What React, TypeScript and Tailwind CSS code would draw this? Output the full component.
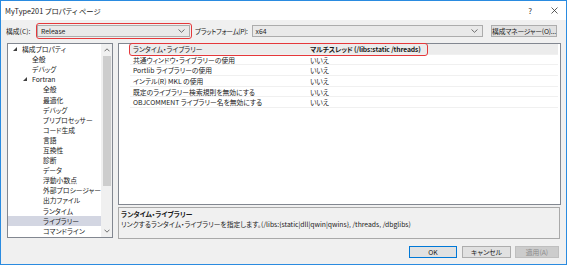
import React from "react";

type TreeItem = {
  label: string;
  level: number;
  expander?: boolean;
  selected?: boolean;
};

const treeItems: TreeItem[] = [
  { label: "構成プロパティ", level: 0, expander: true },
  { label: "全般", level: 1 },
  { label: "デバッグ", level: 1 },
  { label: "Fortran", level: 1, expander: true },
  { label: "全般", level: 2 },
  { label: "最適化", level: 2 },
  { label: "デバッグ", level: 2 },
  { label: "プリプロセッサー", level: 2 },
  { label: "コード生成", level: 2 },
  { label: "言語", level: 2 },
  { label: "互換性", level: 2 },
  { label: "診断", level: 2 },
  { label: "データ", level: 2 },
  { label: "浮動小数点", level: 2 },
  { label: "外部プロシージャー", level: 2 },
  { label: "出力ファイル", level: 2 },
  { label: "ランタイム", level: 2 },
  { label: "ライブラリー", level: 2, selected: true },
  { label: "コマンドライン", level: 2 },
];

const rows = [
  { name: "ランタイム・ライブラリー", value: "マルチスレッド (/libs:static /threads)" },
  { name: "共通ウィンドウ・ライブラリーの使用", value: "いいえ" },
  { name: "Portlib ライブラリーの使用", value: "いいえ" },
  { name: "インテル(R) MKL の使用", value: "いいえ" },
  { name: "既定のライブラリー検索規則を無効にする", value: "いいえ" },
  { name: "OBJCOMMENT ライブラリー名を無効にする", value: "いいえ" },
];

const padByLevel = ["pl-[5px]", "pl-[15px]", "pl-[26px]"];

function Chevron() {
  return (
    <svg width="7" height="4" viewBox="0 0 7 4" className="shrink-0">
      <polyline points="0.5,0.5 3.5,3.3 6.5,0.5" fill="none" stroke="#606060" strokeWidth="0.9" />
    </svg>
  );
}

function Combo({ value, className }: { value: string; className: string }) {
  return (
    <div
      className={`h-[12px] bg-[#e9e9e9] border border-[#acacac] flex items-center justify-between pl-[3px] pr-[4px] ${className}`}
    >
      <span>{value}</span>
      <Chevron />
    </div>
  );
}

export default function App() {
  return (
    <div className="w-[567px] h-[265px] overflow-hidden border border-[#2a8be0] bg-[#f0f0f0] flex flex-col text-[6.8px] leading-[10px] whitespace-nowrap text-[#1a1a1a] font-['Noto_Sans_CJK_JP',sans-serif] [font-feature-settings:'palt']">
      {/* タイトルバー */}
      <div className="h-[19px] shrink-0 bg-white flex items-center pl-[4px] pr-[8px]">
        <span className="text-[7.3px]">MyType201 プロパティ ページ</span>
        <span className="ml-auto text-[8px] text-[#333]">?</span>
        <svg width="7" height="7" viewBox="0 0 7 7" className="ml-[19px]">
          <path d="M0.5 0.5 L6.5 6.5 M6.5 0.5 L0.5 6.5" stroke="#333" strokeWidth="0.8" />
        </svg>
      </div>

      {/* 構成 / プラットフォーム */}
      <div className="h-[16px] mt-[3px] shrink-0 flex items-center pl-[5px] pr-[9px]">
        <span className="w-[31px]">構成(C):</span>
        <div className="relative">
          <Combo value="Release" className="w-[153px]" />
          <div className="absolute -left-[1px] -right-[2px] -top-[2px] -bottom-[2px] border-[1.5px] border-[#e5383b] rounded-[3px]" />
        </div>
        <span className="ml-[5px] mr-[4px] tracking-[-0.4px]">プラットフォーム(P):</span>
        <Combo value="x64" className="flex-1" />
        <div className="ml-[8px] w-[66px] h-[12px] bg-[#e1e1e1] border border-[#adadad] flex items-center justify-center tracking-[-0.2px]">
          構成マネージャー(O)...
        </div>
      </div>

      {/* メイン */}
      <div className="mt-[4px] h-[196px] shrink-0 flex pl-[6px] pr-[5px] gap-[5px]">
        {/* ツリー */}
        <div className="w-[106px] h-[195px] bg-white border border-[#828790] flex">
          <div className="flex-1 flex flex-col overflow-hidden">
            {treeItems.map((item, i) => (
              <div
                key={i}
                className={`h-[10.1px] flex items-center ${padByLevel[item.level]} ${
                  item.selected ? "bg-[#d3d6e2]" : ""
                }`}
              >
                <span className="w-[9px] shrink-0 flex items-center">
                  {item.expander && (
                    <svg width="4" height="4" viewBox="0 0 4 4">
                      <polygon points="4,0 4,4 0,4" fill="#404040" />
                    </svg>
                  )}
                </span>
                <span>{item.label}</span>
              </div>
            ))}
          </div>
          {/* スクロールバー */}
          <div className="w-[11px] bg-[#f0f0f0] flex flex-col items-center">
            <svg width="6" height="4" viewBox="0 0 6 4" className="mt-[4px]">
              <polyline points="0.5,3.3 3,0.8 5.5,3.3" fill="none" stroke="#606060" strokeWidth="0.9" />
            </svg>
            <div className="mt-[4px] w-[8px] h-[130px] bg-[#cdcdcd]" />
            <svg width="6" height="4" viewBox="0 0 6 4" className="mt-auto mb-[4px]">
              <polyline points="0.5,0.7 3,3.2 5.5,0.7" fill="none" stroke="#606060" strokeWidth="0.9" />
            </svg>
          </div>
        </div>

        {/* 右側 */}
        <div className="flex-1 flex flex-col gap-[2px]">
          <div className="h-[162px] bg-white border border-[#828790] pl-[11px] pr-[2px]">
            <div className="relative flex flex-col">
              {rows.map((row, i) => (
                <div
                  key={i}
                  className={`h-[10.7px] flex items-center border-b border-[#f0f0f0] ${
                    i === 0 ? "bg-[#ececec]" : ""
                  }`}
                >
                  <span className="w-[177px] shrink-0 pl-[3px]">{row.name}</span>
                  <span className={`pl-[3px] ${i === 0 ? "font-bold tracking-[-0.15px]" : ""}`}>
                    {row.value}
                  </span>
                </div>
              ))}
              <div className="absolute -left-[1px] -top-[1px] w-[299px] h-[13px] border-[1.5px] border-[#e5383b] rounded-[3px]" />
            </div>
          </div>
          <div className="h-[32px] mr-[1px] bg-[#f0f0f0] border border-[#a9a9a9] pl-[2px] pt-[1px]">
            <div className="font-bold">ランタイム・ライブラリー</div>
            <div>リンクするランタイム・ライブラリーを指定します。(/libs:{"{"}static|dll|qwin|qwins{"}"}, /threads, /dbglibs)</div>
          </div>
        </div>
      </div>

      {/* ボタン */}
      <div className="mt-[7px] flex justify-end pr-[7px]">
        <div className="w-[48px] h-[12px] bg-[#e1e1e1] border border-[#0078d7] flex items-center justify-center">
          OK
        </div>
        <div className="ml-[5px] w-[49px] h-[12px] bg-[#e1e1e1] border border-[#adadad] flex items-center justify-center">
          キャンセル
        </div>
        <div className="ml-[4px] w-[44px] h-[12px] bg-[#cccccc] border border-[#bfbfbf] text-[#8a8a8a] flex items-center justify-center">
          適用(A)
        </div>
      </div>
    </div>
  );
}
